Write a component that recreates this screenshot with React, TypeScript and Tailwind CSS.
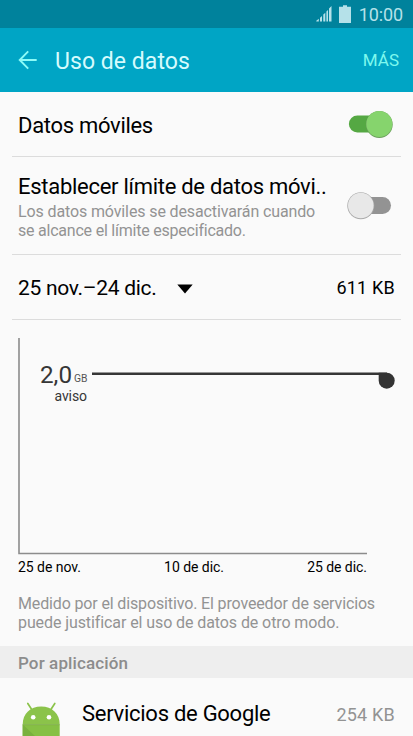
const StatusBar = () => {
  return (
    <div className="flex h-[28px] items-center justify-end bg-[#00829c] pr-[10px] text-[#b5e1e9]">
      <svg width="16" height="16" viewBox="0 0 16 16" fill="currentColor" className="mr-[7px]">
        <path d="M0.3 15.6V14.8L2.8 12.8V15.6ZM4 15.6V11.8L6 10V15.6ZM7.3 15.6V8.6L9.3 6.8V15.6ZM10.4 15.6V5.6L12 4V15.6ZM13 15.6V2.5L15.5 0V15.6Z" />
      </svg>
      <svg width="12" height="18" viewBox="0 0 12 18" fill="currentColor" className="mr-[8px]">
        <path d="M4 0.3H8V1.7H12V18H0V1.7H4Z" />
      </svg>
      <span className="pt-px text-[18px] leading-[28px] tracking-[-0.1px]">10:00</span>
    </div>
  );
};

const Header = () => {
  return (
    <div className="flex h-[64px] items-center bg-[#00a5c5] pr-[14px] pl-[18px]">
      <svg
        width="20"
        height="20"
        viewBox="0 0 20 20"
        fill="none"
        stroke="#8dfbf7"
        strokeWidth="1.9"
      >
        <path d="M18.7 10H2M10.2 1.3L1.7 10L10.2 18.7" />
      </svg>
      <h1 className="ml-[17px] flex-1 pt-[3px] text-[23px] leading-[28px] tracking-[0.05px] text-[#d6fbfd]">
        Uso de datos
      </h1>
      <span className="text-[17px] leading-[24px] text-[#7df8ee]">MÁS</span>
    </div>
  );
};

const Toggle = ({ on }: { on: boolean }) => {
  return on ? (
    <svg width="46" height="30" viewBox="0 0 46 30">
      <rect x="1.9" y="6.5" width="38" height="17" rx="8.5" fill="#55a843" />
      <circle cx="32.3" cy="15.5" r="13.4" fill="#6b9f5c" />
      <circle cx="32.3" cy="15" r="13" fill="#86d46d" />
    </svg>
  ) : (
    <svg width="46" height="30" viewBox="0 0 46 30">
      <rect x="8" y="6" width="36" height="17" rx="8.5" fill="#939393" />
      <circle cx="13.8" cy="14.8" r="13.5" fill="#a9a9a9" />
      <circle cx="13.8" cy="14.5" r="12.8" fill="#e8e8e8" />
    </svg>
  );
};

const UsageChart = () => {
  return (
    <div className="h-[233px] pt-[18px]">
      <svg width="413" height="218" viewBox="0 338 413 218" className="block">
        <path d="M19 338V553.5H367" fill="none" stroke="#8c8c8c" strokeWidth="1.6" />
        <path d="M92 373.8H387" stroke="#363636" strokeWidth="2.4" />
        <path d="M378.7 372.7H386.7A8 8 0 1 1 378.7 380.7Z" fill="#333333" />
        <text x="40" y="382.5" fontSize="24" fill="#363636" textLength="32" lengthAdjust="spacingAndGlyphs">
          2,0
        </text>
        <text x="74" y="382.3" fontSize="10" fill="#555555" textLength="13.5" lengthAdjust="spacingAndGlyphs">
          GB
        </text>
        <text x="54.5" y="401" fontSize="14" fill="#363636" textLength="32.5">
          aviso
        </text>
      </svg>
    </div>
  );
};

const AndroidIcon = () => {
  return (
    <svg width="38" height="34" viewBox="0 0 38 34" className="mt-[24px] block">
      <path d="M5.8 1.5L9.4 7M32.8 1.5L29.2 7" stroke="#8bc34a" strokeWidth="1.7" strokeLinecap="round" />
      <path d="M0.7 22.5C0.7 11.5 8.4 4.5 19.2 4.5S37.7 11.5 37.7 22.5Z" fill="#8bc34a" />
      <path d="M0.7 22.5H37.7V34H0.7Z" fill="#86c044" />
      <path d="M0.7 22.5L13 34H0.7Z" fill="#79b13e" />
      <path d="M0.7 22.7H37.7" stroke="#78aa43" strokeWidth="0.8" />
      <circle cx="11.2" cy="15.2" r="2.3" fill="#fff" />
      <circle cx="27" cy="15.2" r="2.3" fill="#fff" />
    </svg>
  );
};

const App = () => {
  return (
    <div className="h-[736px] w-[413px] overflow-hidden bg-[#fafafa] font-[Roboto,sans-serif] text-black">
      <StatusBar />
      <Header />
      <div className="mx-[12px] flex h-[65px] items-center justify-between border-b border-[#dcdcdc] pl-[6px] pr-[8px]">
        <span className="pt-[4px] text-[22px] leading-[28px] tracking-[-0.3px]">Datos móviles</span>
        <Toggle on={true} />
      </div>
      <div className="mx-[12px] flex h-[98px] items-center justify-between border-b border-[#dcdcdc] pl-[6px] pr-[8px]">
        <div className="pt-px whitespace-nowrap">
          <p className="text-[22px] leading-[28px] tracking-[-0.28px]">Establecer límite de datos móvi..</p>
          <p className="pt-px text-[16px] leading-[19px] tracking-[-0.12px] text-[#939393]">
            Los datos móviles se desactivarán cuando
            <br />
            <span className="tracking-[-0.22px]">se alcance el límite especificado.</span>
          </p>
        </div>
        <Toggle on={false} />
      </div>
      <div className="mx-[12px] flex h-[65px] items-center border-b border-[#dcdcdc] pl-[6px] pr-[6px]">
        <span className="pt-[2px] text-[21px] leading-[28px] tracking-[-0.3px]">25 nov.–24 dic.</span>
        <svg width="16" height="10" viewBox="0 0 16 10" className="mt-[3px] ml-[21px]">
          <path d="M0.3 0.5H15.7L8 9.5Z" />
        </svg>
        <span className="ml-auto pt-[2px] text-[18px] leading-[28px] tracking-[0.2px]">611 KB</span>
      </div>
      <UsageChart />
      <div className="flex h-[30px] justify-between pt-[4px] pr-[46px] pl-[18px] text-[14px] leading-[20px] tracking-[-0.05px]">
        <span>25 de nov.</span>
        <span>10 de dic.</span>
        <span>25 de dic.</span>
      </div>
      <p className="h-[63px] pt-[11px] pl-[18px] text-[16px] leading-[19px] tracking-[-0.14px] whitespace-nowrap text-[#939393]">
        Medido por el dispositivo. El proveedor de servicios
        <br />
        <span className="tracking-[-0.09px]">puede justificar el uso de datos de otro modo.</span>
      </p>
      <h2 className="h-[32px] bg-[#eeeeee] pl-[18px] text-[17px] leading-[34px] font-medium tracking-[0.12px] text-[#8c8c8c]">
        Por aplicación
      </h2>
      <div className="flex h-[58px] items-start pr-[18px] pl-[22px]">
        <AndroidIcon />
        <span className="mt-[22px] ml-[22px] text-[22px] leading-[28px] tracking-[-0.27px]">
          Servicios de Google
        </span>
        <span className="mt-[23px] ml-auto text-[18px] leading-[28px] tracking-[0.2px] text-[#939393]">
          254 KB
        </span>
      </div>
    </div>
  );
};

export default App;
